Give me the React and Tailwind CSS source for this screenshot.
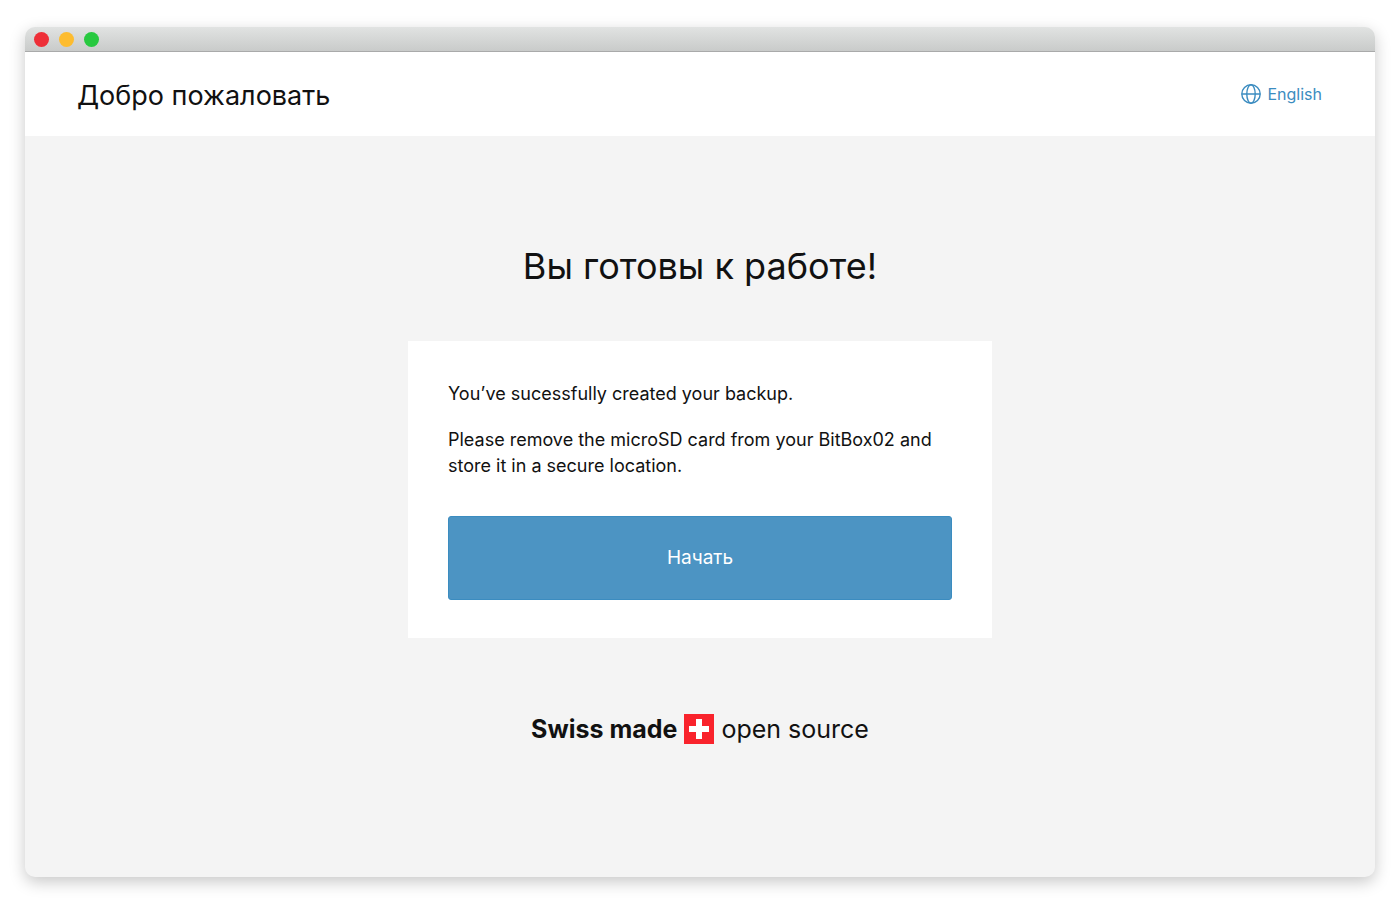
import React from 'react';

function TitleBar() {
    return (
        <div className="flex h-[25px] shrink-0 items-center gap-[10px] border-b border-[#a9aaaa] bg-linear-to-b from-[#e1e3e2] to-[#c9cbca] pl-[9px]">
            <span className="size-[15px] rounded-full bg-[#ee2f38]" />
            <span className="size-[15px] rounded-full bg-[#fdbc2f]" />
            <span className="size-[15px] rounded-full bg-[#28c940]" />
        </div>
    );
}

function GlobeIcon() {
    return (
        <svg viewBox="0 0 20 20" className="size-5" fill="none" stroke="currentColor" strokeWidth="1.4" aria-hidden="true">
            <circle cx="10" cy="10" r="9.2" />
            <ellipse cx="10" cy="10" rx="4.2" ry="9.2" />
            <path d="M0.8 10h18.4" />
        </svg>
    );
}

function SwissFlag() {
    return (
        <svg viewBox="0 0 30 30" className="size-[30px]" aria-hidden="true">
            <path fill="#f9232c" d="M0 0h30v30H0z" />
            <path fill="#fff" d="M12 5h6v7h7v6h-7v7h-6v-7H5v-6h7z" />
        </svg>
    );
}

export default function App() {
    return (
        <div className="flex min-h-screen flex-col bg-white px-[25px] pt-[27px] pb-[26px] font-['Inter',sans-serif] text-[#111]">
            <div className="flex flex-1 flex-col overflow-hidden rounded-[10px] bg-[#f4f4f4] shadow-[0_5px_16px_rgba(0,0,0,0.22)]">
                <TitleBar />
                <header className="flex shrink-0 items-baseline justify-between bg-white pt-6 pr-[53px] pb-5 pl-[52px] leading-[40px]">
                    <h1 className="text-[27px]">Добро пожаловать</h1>
                    <button type="button" className="flex items-center gap-[6px] self-start text-base leading-9 text-[#3b8cc0]">
                        <GlobeIcon />
                        English
                    </button>
                </header>
                <main className="flex flex-1 flex-col items-center px-4 pt-[106px] pb-10">
                    <h2 className="text-center text-[36px] leading-[48px]">Вы готовы к работе!</h2>
                    <section className="mt-[51px] w-full max-w-[584px] bg-white px-10 pt-10 pb-[38px] text-[18px] leading-[26px]">
                        <p>You’ve sucessfully created your backup.</p>
                        <p className="mt-5">Please remove the microSD card from your BitBox02 and store it in a secure location.</p>
                        <button type="button" className="mt-[37px] h-[84px] w-full rounded-[3px] border border-[#3b8cc0] bg-[#4c94c3] text-[19px] text-white">
                            Начать
                        </button>
                    </section>
                    <div className="mt-[76px] flex items-center gap-[7px] text-[25px] leading-[30px]">
                        <strong className="font-bold">Swiss made</strong>
                        <SwissFlag />
                        <span>open source</span>
                    </div>
                </main>
            </div>
        </div>
    );
}
